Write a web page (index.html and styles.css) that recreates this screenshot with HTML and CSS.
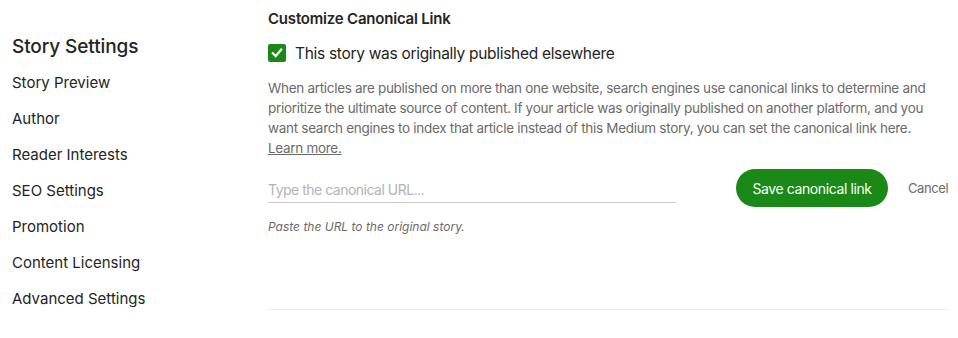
FILE: index.html
```html
<!DOCTYPE html>
<html>
<head>
    <meta charset="UTF-8">
    <title>Story Settings</title>
    <link rel="stylesheet" href="styles.css">
</head>
<body>
<div class="page">
    <div class="side">
        <h2 class="side-title">Story Settings</h2>
        <ul class="side-nav">
            <li>Story Preview</li>
            <li>Author</li>
            <li>Reader Interests</li>
            <li>SEO Settings</li>
            <li>Promotion</li>
            <li>Content Licensing</li>
            <li>Advanced Settings</li>
        </ul>
    </div>
    <div class="main">
        <h3 class="title">Customize Canonical Link</h3>
        <label class="check">
            <span class="box">
                <svg width="12" height="12" viewBox="0 0 12 12"><path d="M1.8 6.3 L4.7 9.1 L10.2 2.6" fill="none" stroke="#fff" stroke-width="2.2" stroke-linecap="square"/></svg>
            </span>
            This story was originally published elsewhere
        </label>
        <p class="desc">When articles are published on more than one website, search engines use canonical links to determine and prioritize the ultimate source of content. If your article was originally published on another platform, and you want search engines to index that article instead of this Medium story, you can set the canonical link here. <a href="#" class="learn">Learn more.</a></p>
        <div class="url-row">
            <input class="url" type="text" placeholder="Type the canonical URL...">
            <button class="save">Save canonical link</button>
            <span class="cancel">Cancel</span>
        </div>
        <p class="hint">Paste the URL to the original story.</p>
        <div class="divider"></div>
    </div>
</div>
</body>
</html>
```

FILE: styles.css
```css
* {
    margin: 0;
    padding: 0;
    box-sizing: border-box;
}

body {
    font-family: Inter, "Liberation Sans", sans-serif;
    color: #242424;
    background: #fff;
}

.page {
    display: flex;
    width: 958px;
}

.side {
    width: 268px;
    flex-shrink: 0;
    padding: 33px 0 0 12px;
}

.side-title {
    font-size: 19px;
    font-weight: 500;
    line-height: 28px;
    margin-bottom: 4px;
    letter-spacing: -0.1px;
}

.side-nav {
    list-style: none;
}

.side-nav li {
    font-size: 15px;
    line-height: 36px;
}

.main {
    width: 680px;
    flex-shrink: 0;
    padding-top: 9px;
}

.title {
    font-size: 15px;
    font-weight: 600;
    line-height: 20px;
    letter-spacing: -0.2px;
}

.check {
    display: flex;
    align-items: center;
    gap: 9px;
    margin-top: 12px;
    height: 24px;
    font-size: 15.5px;
    letter-spacing: -0.3px;
}

.box {
    width: 18px;
    height: 18px;
    flex-shrink: 0;
    border-radius: 2px;
    background: #1a8917;
    display: flex;
    align-items: center;
    justify-content: center;
}

.desc {
    margin-top: 13px;
    font-size: 13.5px;
    line-height: 20px;
    color: #6b6b6b;
    letter-spacing: -0.3px;
}

.learn {
    color: #6b6b6b;
    text-decoration: underline;
}

.url-row {
    display: flex;
    align-items: flex-start;
    margin-top: 11px;
    height: 38px;
}

.url {
    width: 408px;
    flex-shrink: 0;
    height: 30px;
    margin-top: 4px;
    padding-top: 3px;
    border: none;
    border-bottom: 1px solid #ccc;
    font-family: inherit;
    font-size: 14px;
    color: #242424;
    outline: none;
    letter-spacing: -0.5px;
}

.url::placeholder {
    color: #b3b3b3;
}

.save {
    flex-shrink: 0;
    margin-left: 60px;
    width: 152px;
    height: 38px;
    border: none;
    border-radius: 19px;
    background: #1a8917;
    color: #fff;
    font-family: inherit;
    font-size: 14px;
    letter-spacing: -0.4px;
}

.cancel {
    flex-shrink: 0;
    margin-left: 20px;
    line-height: 38px;
    font-size: 13px;
    color: #6b6b6b;
    letter-spacing: -0.4px;
}

.hint {
    margin-top: 12px;
    font-size: 12px;
    line-height: 16px;
    font-style: italic;
    color: #6b6b6b;
}

.divider {
    margin-top: 74px;
    height: 1px;
    background: #ebebeb;
}
```
